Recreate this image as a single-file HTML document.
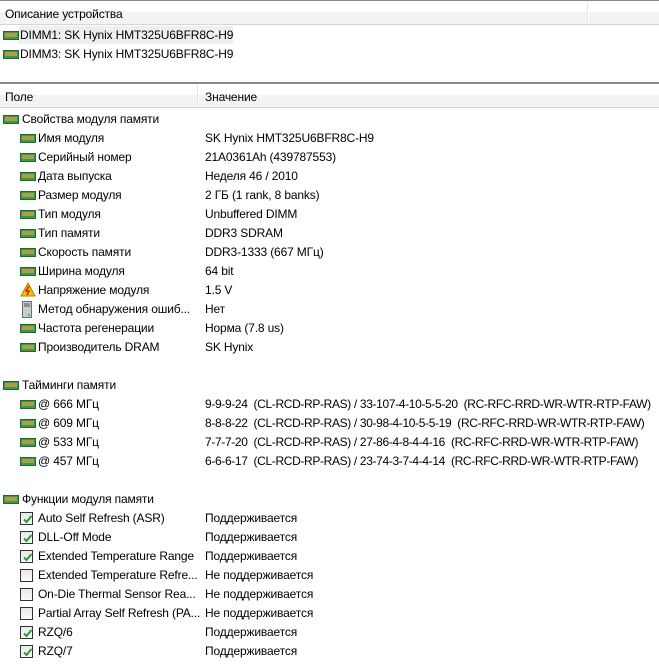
<!DOCTYPE html>
<html><head><meta charset="utf-8"><style>
*{margin:0;padding:0;box-sizing:border-box}
body{width:659px;height:666px;overflow:hidden;background:#fff;font-family:"Liberation Sans","DejaVu Sans",sans-serif;font-size:12px;letter-spacing:-0.15px;color:#000;position:relative}
.hdr{position:absolute;left:0;width:659px;height:24px;background:linear-gradient(#fff 0,#fff 45%,#f1f2f4 50%,#f3f4f6 100%);border-bottom:1px solid #d5d5d5}
.hdr span{position:absolute;top:6px}
.vs{position:absolute;top:1px;width:2px;height:22px;background:#e6e6e6;border-right:1px solid #fff}
.line{position:absolute;left:0;width:659px;height:2px;background:#868a8e}
.r{position:absolute;height:19px;line-height:19px;white-space:pre}
.t{letter-spacing:-0.35px}
.ic{position:absolute;width:16px;height:9px}
.cb{position:absolute;width:13px;height:13px;border:1px solid #333;background:linear-gradient(#e8e8e8,#fafafa)}
.cb svg{position:absolute;left:1px;top:1px}
</style></head><body>
<svg width="0" height="0" style="position:absolute"><defs>
<symbol id="ram" viewBox="0 0 16 9"><rect x="0.5" y="0.5" width="15" height="8" fill="#3a9a4a" stroke="#1f6a2e"/><rect x="2" y="2" width="12" height="4" fill="#f0e080"/><g stroke="#6a5a10" stroke-width="1"><path d="M3 2v4M5 2v4M7 2v4M9 2v4M11 2v4M13 2v4"/></g></symbol>
<symbol id="chk" viewBox="0 0 11 11"><path d="M2 5.5l2.5 2.5 5-6" stroke="#2a9a3a" stroke-width="2" fill="none"/></symbol>
</defs></svg>

<div class="line" style="top:0;height:1px"></div>
<div class="hdr" style="top:1px"><span style="left:5px">Описание устройства</span><div class="vs" style="left:587px"></div></div>
<div style="position:absolute;left:19px;top:26px;width:214px;height:18px;background:#eeeff0"></div>
<svg class="ic" style="left:3px;top:31px"><use href="#ram"/></svg><div class="r" style="left:20px;top:26px">DIMM1: SK Hynix HMT325U6BFR8C-H9</div>
<svg class="ic" style="left:3px;top:50px"><use href="#ram"/></svg><div class="r" style="left:20px;top:45px">DIMM3: SK Hynix HMT325U6BFR8C-H9</div>

<div class="line" style="top:82px"></div>
<div class="hdr" style="top:84px"><span style="left:5px">Поле</span><div class="vs" style="left:197px"></div><span style="left:205px">Значение</span></div>

<div id="rows"></div>
<script>
var rows=[
[0,'ram','Свойства модуля памяти',''],
[1,'ram','Имя модуля','SK Hynix HMT325U6BFR8C-H9'],
[1,'ram','Серийный номер','21A0361Ah (439787553)'],
[1,'ram','Дата выпуска','Неделя 46 / 2010'],
[1,'ram','Размер модуля','2 ГБ (1 rank, 8 banks)'],
[1,'ram','Тип модуля','Unbuffered DIMM'],
[1,'ram','Тип памяти','DDR3 SDRAM'],
[1,'ram','Скорость памяти','DDR3-1333 (667 МГц)'],
[1,'ram','Ширина модуля','64 bit'],
[1,'warn','Напряжение модуля','1.5 V'],
[1,'srv','Метод обнаружения ошиб...','Нет'],
[1,'ram','Частота регенерации','Норма (7.8 us)'],
[1,'ram','Производитель DRAM','SK Hynix'],
null,
[0,'ram','Тайминги памяти',''],
[1,'ram','@ 666 МГц','9-9-9-24  (CL-RCD-RP-RAS) / 33-107-4-10-5-5-20  (RC-RFC-RRD-WR-WTR-RTP-FAW)'],
[1,'ram','@ 609 МГц','8-8-8-22  (CL-RCD-RP-RAS) / 30-98-4-10-5-5-19  (RC-RFC-RRD-WR-WTR-RTP-FAW)'],
[1,'ram','@ 533 МГц','7-7-7-20  (CL-RCD-RP-RAS) / 27-86-4-8-4-4-16  (RC-RFC-RRD-WR-WTR-RTP-FAW)'],
[1,'ram','@ 457 МГц','6-6-6-17  (CL-RCD-RP-RAS) / 23-74-3-7-4-4-14  (RC-RFC-RRD-WR-WTR-RTP-FAW)'],
null,
[0,'ram','Функции модуля памяти',''],
[1,'c1','Auto Self Refresh (ASR)','Поддерживается'],
[1,'c1','DLL-Off Mode','Поддерживается'],
[1,'c1','Extended Temperature Range','Поддерживается'],
[1,'c0','Extended Temperature Refre...','Не поддерживается'],
[1,'c0','On-Die Thermal Sensor Rea...','Не поддерживается'],
[1,'c0','Partial Array Self Refresh (PA...','Не поддерживается'],
[1,'c1','RZQ/6','Поддерживается'],
[1,'c1','RZQ/7','Поддерживается']];
var h='';
rows.forEach(function(r,i){if(!r)return;var t=110+i*19;var ix=r[0]?20:3,tx=r[0]?38:22;
if(r[1]=='ram')h+='<svg class="ic" style="left:'+ix+'px;top:'+(t+5)+'px"><use href="#ram"/></svg>';
else if(r[1]=='warn')h+='<svg style="position:absolute;left:'+ix+'px;top:'+(t+1)+'px" width="16" height="16"><path d="M8 1L15 14H1Z" fill="#f5c400" stroke="#b08000"/><path d="M9 4L6 9h3l-2 4" stroke="#d02000" stroke-width="1.5" fill="none"/></svg>';
else if(r[1]=='srv')h+='<svg style="position:absolute;left:'+(ix+2)+'px;top:'+(t+1)+'px" width="10" height="17"><rect x="0.5" y="0.5" width="9" height="16" fill="#c8ccd0" stroke="#6a6e72"/><path d="M2 3h6M2 5h6" stroke="#555"/><rect x="6" y="13" width="2" height="2" fill="#3c3"/></svg>';
else h+='<div class="cb" style="left:20px;top:'+(t+3)+'px">'+(r[1]=='c1'?'<svg width="11" height="11"><use href="#chk"/></svg>':'')+'</div>';
h+='<div class="r" style="left:'+tx+'px;top:'+t+'px">'+r[2]+'</div>';
if(r[3])h+='<div class="r'+(r[3].length>60?' t':'')+'" style="left:205px;top:'+t+'px">'+r[3]+'</div>';});
document.getElementById('rows').innerHTML=h;
</script>
</body></html>
